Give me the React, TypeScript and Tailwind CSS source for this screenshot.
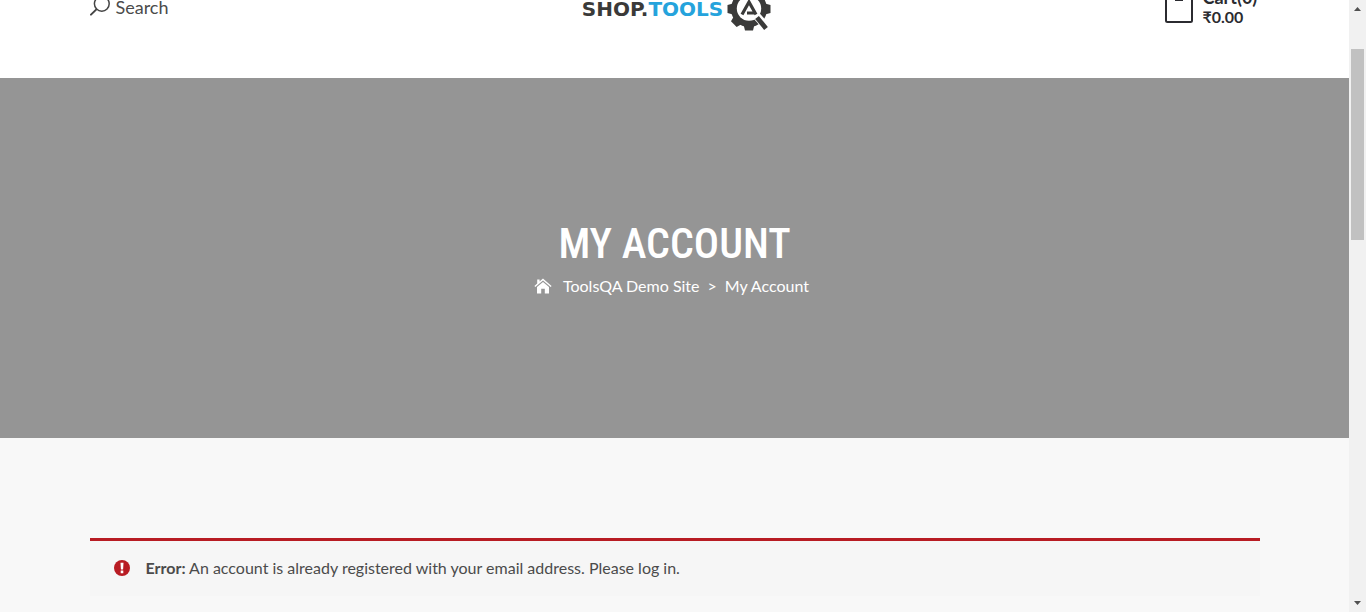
function SearchIcon() {
  return (
    <svg className="h-[22px] w-5" viewBox="0 0 20 22" fill="none" stroke="#444" aria-hidden="true">
      <circle cx="11.8" cy="7.8" r="7.4" strokeWidth="1.5" />
      <path d="M6.4 13.4 L1 18.6" strokeWidth="2" strokeLinecap="round" />
    </svg>
  );
}

const teeth = [0, 45, 90, 180, 225, 270, 315];

function GearIcon() {
  return (
    <svg className="h-[46px] w-[44px]" viewBox="0 0 44 46" aria-hidden="true">
      <g fill="#3a3a39">
        <circle cx="22" cy="23" r="18" />
        {teeth.map((a) => (
          <path key={a} d="M16.6 7 L18 1.5 H26 L27.4 7 Z" transform={`rotate(${a} 22 23)`} />
        ))}
      </g>
      <path d="M27 27 L43 45" stroke="#fff" strokeWidth="8" />
      <circle cx="22" cy="22.5" r="12.2" fill="#fff" />
      <path d="M30 31.5 L39 42.5" stroke="#3a3a39" strokeWidth="4.8" />
      <path d="M15 28.5 L22 16 L29 28.5 M20 27 H27" fill="none" stroke="#3a3a39" strokeWidth="3.2" />
    </svg>
  );
}

function BagIcon() {
  return (
    <svg className="h-8 w-7" viewBox="0 0 28 32" fill="none" stroke="#2b2b30" strokeWidth="2" aria-hidden="true">
      <rect x="1" y="4" width="26" height="27" rx="1.5" />
      <path d="M10 9 H18" />
    </svg>
  );
}

function HomeIcon() {
  return (
    <svg className="h-4 w-[18px]" viewBox="0 0 18 16" fill="#fff" aria-hidden="true">
      <path d="M9 0.5 L10.6 1.9 L14.4 5.2 L17.6 8 L16.7 9 L9 2.5 L1.3 9 L0.4 8 L3.2 5.5 V1.4 H5.6 V3.4 Z" />
      <path d="M9 3.9 L15 9 V15.4 H10.8 V10.8 H7.2 V15.4 H3 V9 Z" />
    </svg>
  );
}

function ErrorIcon() {
  return (
    <svg className="h-4 w-4" viewBox="0 0 16 16" aria-hidden="true">
      <circle cx="8" cy="8" r="8" fill="#b81c23" />
      <path d="M6.5 2.8 H9.5 L9.1 9.6 H6.9 Z M6.7 10.6 H9.3 V13.2 H6.7 Z" fill="#fff" />
    </svg>
  );
}

function ScrollRail() {
  return (
    <div className="flex w-[17px] shrink-0 flex-col items-center bg-[#f1f1f1]" aria-hidden="true">
      <svg className="h-[17px] w-[17px]" viewBox="0 0 17 17" fill="#505050">
        <path d="M5 11 L8.5 7 L12 11 Z" />
      </svg>
      <div className="mt-8 h-[191px] w-[13px] bg-[#c1c1c1]" />
      <svg className="mt-auto h-[17px] w-[17px]" viewBox="0 0 17 17" fill="#505050">
        <path d="M5 6 L8.5 10 L12 6 Z" />
      </svg>
    </div>
  );
}

export default function App() {
  return (
    <div className="flex min-h-screen bg-[#f8f8f8] font-['Lato',sans-serif] text-base text-[#4b4b4b]">
      <div className="min-w-0 flex-1">
        <header className="overflow-hidden bg-white">
          <div className="mx-auto -mt-16 grid h-[142px] max-w-[1170px] grid-cols-[1fr_auto_1fr] items-center">
            <button type="button" className="flex items-center gap-1.5 text-lg leading-6 text-[#4b4b4b]">
              <SearchIcon />
              Search
            </button>
            <a href="#" className="flex items-center gap-1 pl-1 pt-1 font-['DejaVu_Sans',sans-serif] text-[20px] font-bold leading-6 text-[#3a3a39]">
              <span>
                SHOP.<span className="text-[#25a3dc]">TOOLS</span>
              </span>
              <GearIcon />
            </a>
            <a href="#" className="flex items-center gap-2.5 justify-self-end font-bold leading-5 text-[#2b2b30]">
              <BagIcon />
              <span className="flex w-[57px] flex-col">
                <span className="text-lg leading-5">Cart(0)</span>
                <span>₹0.00</span>
              </span>
            </a>
          </div>
        </header>

        <section className="flex h-[360px] flex-col items-center justify-center gap-[5px] bg-[#959595] text-white">
          <h1 className="font-['Liberation_Sans_Narrow','Roboto_Condensed','Roboto',sans-serif] text-[42px] font-medium leading-[50px]">
            MY ACCOUNT
          </h1>
          <nav aria-label="Breadcrumb" className="flex items-center pr-1.5 leading-6">
            <a href="#" aria-label="Home" className="mr-[11px]">
              <HomeIcon />
            </a>
            <a href="#">ToolsQA Demo Site</a>
            <span className="mx-2">&gt;</span>
            <span>My Account</span>
          </nav>
        </section>

        <main className="mx-auto max-w-[1170px] pt-[100px]">
          <div role="alert" className="flex items-center gap-4 border-t-[3px] border-[#b81c23] bg-[#f6f6f6] px-6 pb-4 pt-[15px] leading-6">
            <ErrorIcon />
            <p>
              <strong className="font-bold">Error:</strong> An account is already registered with your email address. Please log in.
            </p>
          </div>
        </main>
      </div>
      <ScrollRail />
    </div>
  );
}
